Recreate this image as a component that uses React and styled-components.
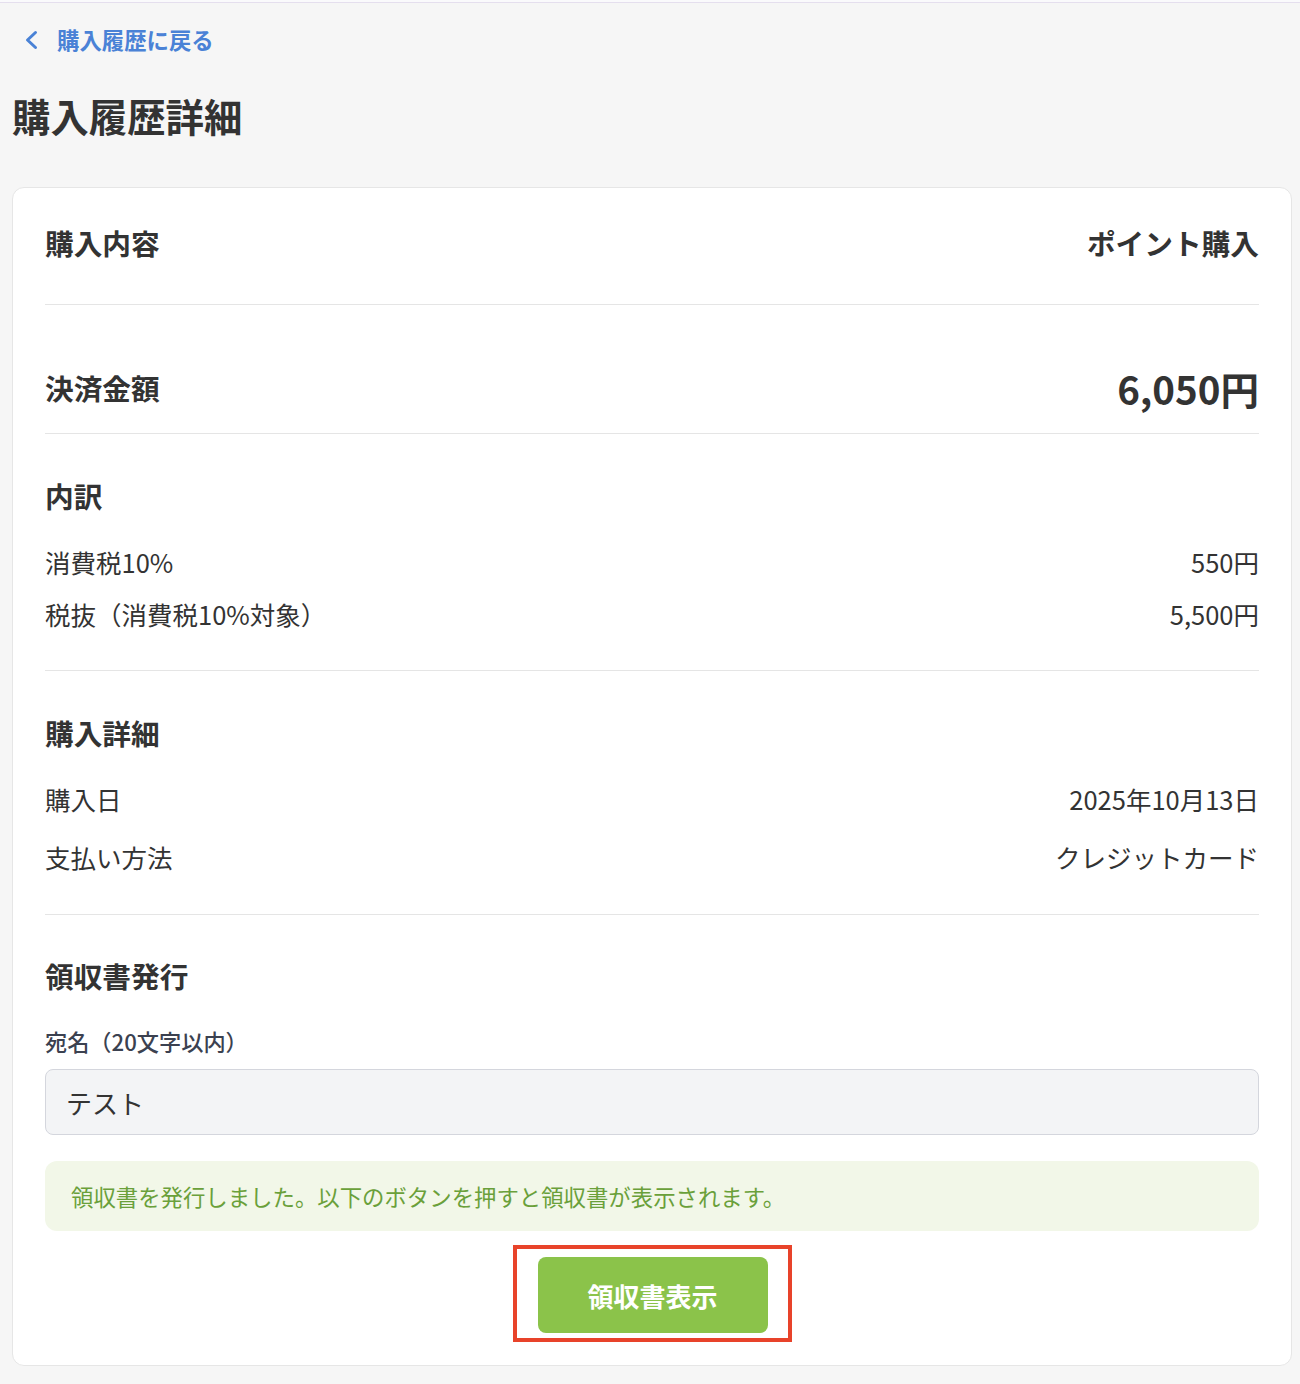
import React from 'react';
import styled, { createGlobalStyle } from 'styled-components';

const GlobalStyle = createGlobalStyle`
  * { box-sizing: border-box; }
  body {
    margin: 0;
    background: #f6f6f6;
    color: #333;
    font-family: "Noto Sans CJK JP", "Noto Sans", sans-serif;
  }
`;

const TopRule = styled.div`
  height: 3px;
  border-top: 2px solid #fafafc;
  background: #e5dfee;
`;

const Page = styled.div`
  padding: 0 8px 0 12px;
`;

const BackLink = styled.a`
  display: flex;
  align-items: center;
  gap: 19px;
  margin-top: 20px;
  padding-left: 12px;
  font-size: 22.4px;
  line-height: 33px;
  font-weight: 700;
  color: #4a82d6;
  text-decoration: none;
  cursor: pointer;

  svg {
    flex: none;
  }
`;

const Title = styled.h1`
  margin: 33px 0 45px;
  font-size: 38.4px;
  line-height: 53px;
  font-weight: 700;
  color: #333;
`;

const Card = styled.div`
  display: flex;
  flex-direction: column;
  background: #fff;
  border: 1px solid #e6e6e6;
  border-radius: 12px;
  padding: 0 32px 23px;
`;

const Section = styled.section`
  display: flex;
  flex-direction: column;
  padding: ${(p) => p.$pad};
  border-bottom: ${(p) => (p.$last ? 'none' : '1px solid #e5e5e5')};
`;

const SummaryRow = styled.div`
  display: flex;
  justify-content: space-between;
  align-items: center;
  font-size: 28.7px;
  line-height: ${(p) => p.$lh || '42px'};
  font-weight: 700;
`;

const Amount = styled.span`
  font-size: 38.5px;
  font-weight: 700;
`;

const Heading = styled.h2`
  margin: 0 0 19px;
  font-size: 28.7px;
  line-height: 42px;
  font-weight: 700;
`;

const Rows = styled.div`
  display: flex;
  flex-direction: column;
  gap: ${(p) => p.$gap || 0}px;
`;

const Row = styled.div`
  display: flex;
  justify-content: space-between;
  font-size: 25.5px;
  line-height: 52px;
`;

const FieldLabel = styled.label`
  margin-top: 9px;
  font-size: 22.2px;
  line-height: 33px;
  font-weight: 500;
  color: #3b4150;
`;

const TextInput = styled.input`
  margin-top: 11px;
  height: 66px;
  width: 100%;
  padding: 0 20px;
  background: #f3f4f6;
  border: 1px solid #d4d6dd;
  border-radius: 8px;
  font-family: "Noto Sans CJK JP", "Noto Sans", sans-serif;
  font-size: 26px;
  color: #333;
  outline: none;
`;

const Notice = styled.div`
  display: flex;
  align-items: center;
  margin-top: 26px;
  height: 70px;
  padding: 0 26px;
  background: #f2f7e8;
  border-radius: 12px;
  font-size: 22.4px;
  color: #6aa03a;
`;

const Highlight = styled.div`
  align-self: center;
  margin-top: 14px;
  padding: 8px 20px 5px 21px;
  border: 4px solid #e8432a;
`;

const ReceiptButton = styled.button`
  display: block;
  width: 230px;
  height: 76px;
  border: none;
  border-radius: 8px;
  background: #8bc34a;
  color: #fff;
  font-family: "Noto Sans CJK JP", "Noto Sans", sans-serif;
  font-size: 26px;
  font-weight: 700;
  cursor: pointer;
`;

const breakdown = [
  ['消費税10%', '550円'],
  ['税抜（消費税10%対象）', '5,500円'],
];

const details = [
  ['購入日', '2025年10月13日'],
  ['支払い方法', 'クレジットカード'],
];

function ChevronLeft() {
  return (
    <svg width="14" height="20" viewBox="0 0 14 20">
      <polyline
        points="11.5,2.5 3.5,10 11.5,17.5"
        fill="none"
        stroke="#4a82d6"
        strokeWidth="3"
        strokeLinecap="round"
        strokeLinejoin="round"
      />
    </svg>
  );
}

export default function App() {
  return (
    <>
      <GlobalStyle />
      <TopRule />
      <Page>
        <BackLink>
          <ChevronLeft />
          購入履歴に戻る
        </BackLink>
        <Title>購入履歴詳細</Title>

        <Card>
          <Section $pad="34px 0 40px">
            <SummaryRow>
              <span>購入内容</span>
              <span>ポイント購入</span>
            </SummaryRow>
          </Section>

          <Section $pad="53px 0 15px">
            <SummaryRow $lh="60px">
              <span>決済金額</span>
              <Amount>6,050円</Amount>
            </SummaryRow>
          </Section>

          <Section $pad="41px 0 30px">
            <Heading>内訳</Heading>
            <Rows>
              {breakdown.map(([label, value]) => (
                <Row key={label}>
                  <span>{label}</span>
                  <span>{value}</span>
                </Row>
              ))}
            </Rows>
          </Section>

          <Section $pad="41px 0 31px">
            <Heading>購入詳細</Heading>
            <Rows $gap={6}>
              {details.map(([label, value]) => (
                <Row key={label}>
                  <span>{label}</span>
                  <span>{value}</span>
                </Row>
              ))}
            </Rows>
          </Section>

          <Section $pad="40px 0 0" $last>
            <Heading>領収書発行</Heading>
            <FieldLabel>宛名（20文字以内）</FieldLabel>
            <TextInput readOnly defaultValue="テスト" />
            <Notice>領収書を発行しました。以下のボタンを押すと領収書が表示されます。</Notice>
            <Highlight>
              <ReceiptButton>領収書表示</ReceiptButton>
            </Highlight>
          </Section>
        </Card>
      </Page>
    </>
  );
}
